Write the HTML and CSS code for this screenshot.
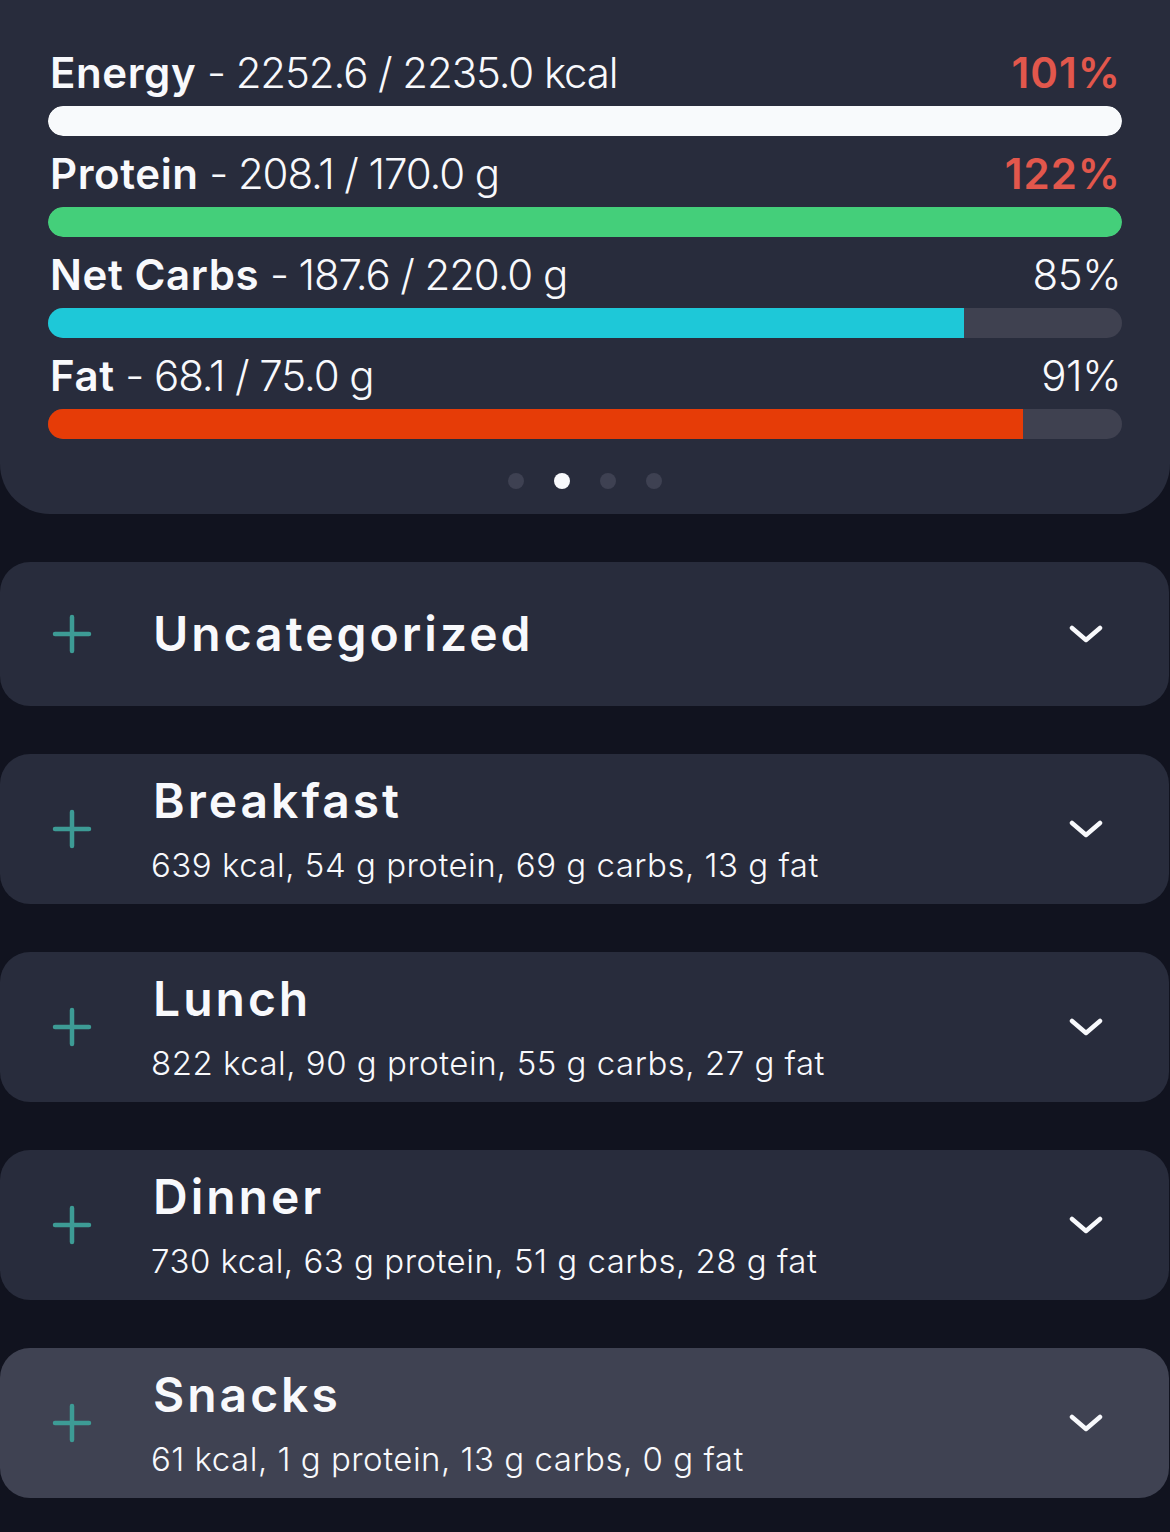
FILE: index.html
```html
<!DOCTYPE html>
<html lang="en">
<head>
  <meta charset="UTF-8">
  <meta name="viewport" content="width=device-width, initial-scale=1.0">
  <title>Diary</title>
  <link rel="stylesheet" href="styles.css">
</head>
<body>

<div class="summary">
  <div class="metric">
    <div class="metric-head">
      <span class="metric-text"><b>Energy</b> - 2252.6 / 2235.0 kcal</span>
      <span class="metric-pct over">101%</span>
    </div>
    <div class="track"><div class="fill energy" style="width: 100%"></div></div>
  </div>
  <div class="metric">
    <div class="metric-head">
      <span class="metric-text"><b>Protein</b> - 208.1 / 170.0 g</span>
      <span class="metric-pct over">122%</span>
    </div>
    <div class="track"><div class="fill protein" style="width: 100%"></div></div>
  </div>
  <div class="metric">
    <div class="metric-head">
      <span class="metric-text"><b>Net Carbs</b> - 187.6 / 220.0 g</span>
      <span class="metric-pct">85%</span>
    </div>
    <div class="track"><div class="fill carbs" style="width: 85.3%"></div></div>
  </div>
  <div class="metric">
    <div class="metric-head">
      <span class="metric-text"><b>Fat</b> - 68.1 / 75.0 g</span>
      <span class="metric-pct">91%</span>
    </div>
    <div class="track"><div class="fill fat" style="width: 90.8%"></div></div>
  </div>

  <div class="dots">
    <span class="dot"></span>
    <span class="dot active"></span>
    <span class="dot"></span>
    <span class="dot"></span>
  </div>
</div>

<div class="meals">
  <div class="meal">
    <svg class="plus" viewBox="0 0 40 40"><path d="M20 3v34M3 20h34"/></svg>
    <div class="meal-info">
      <div class="meal-name">Uncategorized</div>
    </div>
    <svg class="chevron" viewBox="0 0 34 18"><path d="M3 3l14 12 14-12"/></svg>
  </div>
  <div class="meal tall">
    <svg class="plus" viewBox="0 0 40 40"><path d="M20 3v34M3 20h34"/></svg>
    <div class="meal-info">
      <div class="meal-name">Breakfast</div>
      <div class="meal-sum">639 kcal, 54 g protein, 69 g carbs, 13 g fat</div>
    </div>
    <svg class="chevron" viewBox="0 0 34 18"><path d="M3 3l14 12 14-12"/></svg>
  </div>
  <div class="meal tall">
    <svg class="plus" viewBox="0 0 40 40"><path d="M20 3v34M3 20h34"/></svg>
    <div class="meal-info">
      <div class="meal-name">Lunch</div>
      <div class="meal-sum">822 kcal, 90 g protein, 55 g carbs, 27 g fat</div>
    </div>
    <svg class="chevron" viewBox="0 0 34 18"><path d="M3 3l14 12 14-12"/></svg>
  </div>
  <div class="meal tall">
    <svg class="plus" viewBox="0 0 40 40"><path d="M20 3v34M3 20h34"/></svg>
    <div class="meal-info">
      <div class="meal-name">Dinner</div>
      <div class="meal-sum">730 kcal, 63 g protein, 51 g carbs, 28 g fat</div>
    </div>
    <svg class="chevron" viewBox="0 0 34 18"><path d="M3 3l14 12 14-12"/></svg>
  </div>
  <div class="meal tall pressed">
    <svg class="plus" viewBox="0 0 40 40"><path d="M20 3v34M3 20h34"/></svg>
    <div class="meal-info">
      <div class="meal-name">Snacks</div>
      <div class="meal-sum">61 kcal, 1 g protein, 13 g carbs, 0 g fat</div>
    </div>
    <svg class="chevron" viewBox="0 0 34 18"><path d="M3 3l14 12 14-12"/></svg>
  </div>
</div>

</body>
</html>
```

FILE: styles.css
```css
body {
  margin: 0;
  background-color: #11131f;
  color: #f8f9fc;
  font-family: Inter, "Noto Sans", sans-serif;
}

/* daily totals card */
.summary {
  background-color: #282c3c;
  border-radius: 0 0 50px 50px;
  padding: 47px 48px 25px;
}

.metric {
  margin-bottom: 12px;
}

.metric-head {
  display: flex;
  justify-content: space-between;
  align-items: baseline;
  height: 52px;
  line-height: 52px;
  padding: 0 1px 0 2px;
  margin-bottom: 7px;
}

.metric-text {
  font-size: 42px;
  font-weight: 300;
  letter-spacing: -1.1px;
}

.metric-text b {
  font-weight: 600;
  letter-spacing: 0.6px;
}

.metric-pct {
  font-size: 42px;
  font-weight: 300;
  letter-spacing: -0.5px;
}

.metric-pct.over {
  color: #e2574c;
  font-weight: 600;
  letter-spacing: 1px;
}

.track {
  height: 30px;
  border-radius: 15px;
  background-color: #3f4150;
  overflow: hidden;
}

.fill {
  height: 100%;
}

.fill.energy { background-color: #f8fafc; border-radius: 15px; }
.fill.protein { background-color: #44cf7a; border-radius: 15px; }
.fill.carbs { background-color: #1ec8d8; }
.fill.fat { background-color: #e63c07; }

.dots {
  display: flex;
  justify-content: center;
  gap: 30px;
  margin-top: 34px;
}

.dot {
  width: 16px;
  height: 16px;
  border-radius: 50%;
  background-color: #3e4152;
}

.dot.active {
  background-color: #f8f9fc;
}

/* meal sections */
.meals {
  display: flex;
  flex-direction: column;
  gap: 48px;
  margin-top: 48px;
}

.meal {
  display: flex;
  align-items: center;
  height: 144px;
  margin-right: 1px;
  padding: 0 66px 0 52px;
  background-color: #282c3c;
  border-radius: 30px;
}

.meal.tall {
  height: 150px;
}

.meal.pressed {
  background-color: #3f4252;
}

.plus {
  width: 40px;
  height: 40px;
  flex-shrink: 0;
  fill: none;
  stroke: #3d9b95;
  stroke-width: 4.5;
  stroke-linecap: round;
}

.meal-info {
  flex: 1;
  display: flex;
  flex-direction: column;
  gap: 14px;
  margin-left: 61px;
}

.meal-name {
  font-size: 48px;
  line-height: 58px;
  font-weight: 600;
  letter-spacing: 3px;
}

.meal-sum {
  font-size: 33px;
  line-height: 42px;
  font-weight: 300;
  letter-spacing: 0.5px;
  margin-left: -2px;
}

.chevron {
  width: 34px;
  height: 18px;
  flex-shrink: 0;
  fill: none;
  stroke: #f8f9fc;
  stroke-width: 4.5;
  stroke-linecap: round;
  stroke-linejoin: round;
}
```
